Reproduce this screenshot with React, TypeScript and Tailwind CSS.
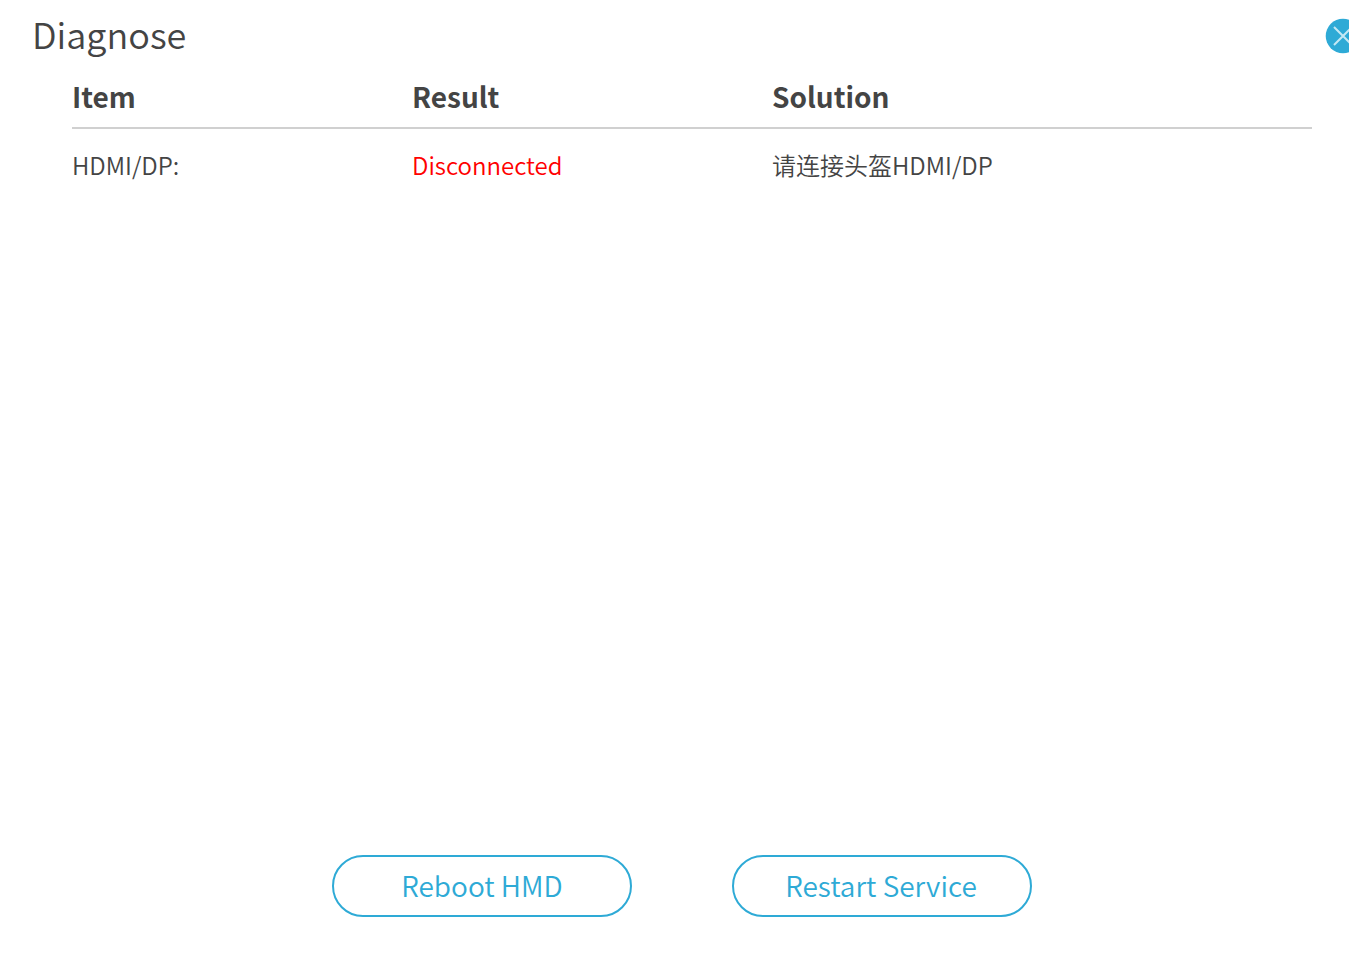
export default function App() {
  const font = { fontFamily: '"Noto Sans CJK SC", "Noto Sans", sans-serif' };
  return (
    <div style={font} className="relative flex h-[965px] w-[1349px] flex-col overflow-hidden bg-white text-[#444444]">
      <h1 className="ml-[32px] mt-[7px] h-[52px] text-[36px] leading-[52px] font-[350]">Diagnose</h1>
      <svg className="absolute left-[1325px] top-[18px]" width="36" height="36" viewBox="0 0 36 36">
        <circle cx="18" cy="18" r="17.3" fill="#2eaad6" />
        <path d="M9 9L27 27M27 9L9 27" stroke="#c4e8f4" strokeWidth="2" />
      </svg>
      <div className="ml-[72px] mt-[5px] w-[1240px]">
        <div className="grid h-[65px] grid-cols-[340px_360px_1fr] items-center border-b-2 border-[#d0d0d0] text-[28px] font-bold">
          <div>Item</div>
          <div>Result</div>
          <div>Solution</div>
        </div>
        <div className="grid h-[72px] grid-cols-[340px_360px_1fr] items-center text-[24px] font-[350]">
          <div>HDMI/DP:</div>
          <div className="text-[#ff0000]">Disconnected</div>
          <div>请连接头盔HDMI/DP</div>
        </div>
      </div>
      <div className="ml-[332px] mt-[654px] flex gap-[100px]">
        <button className="h-[62px] w-[300px] rounded-[31px] border-2 border-[#2eaad6] pb-[3px] text-[28px] font-[350] text-[#2eaad6]">Reboot HMD</button>
        <button className="h-[62px] w-[300px] rounded-[31px] border-2 border-[#2eaad6] pb-[3px] pr-[2px] text-[28px] font-[350] text-[#2eaad6]">Restart Service</button>
      </div>
    </div>
  );
}
